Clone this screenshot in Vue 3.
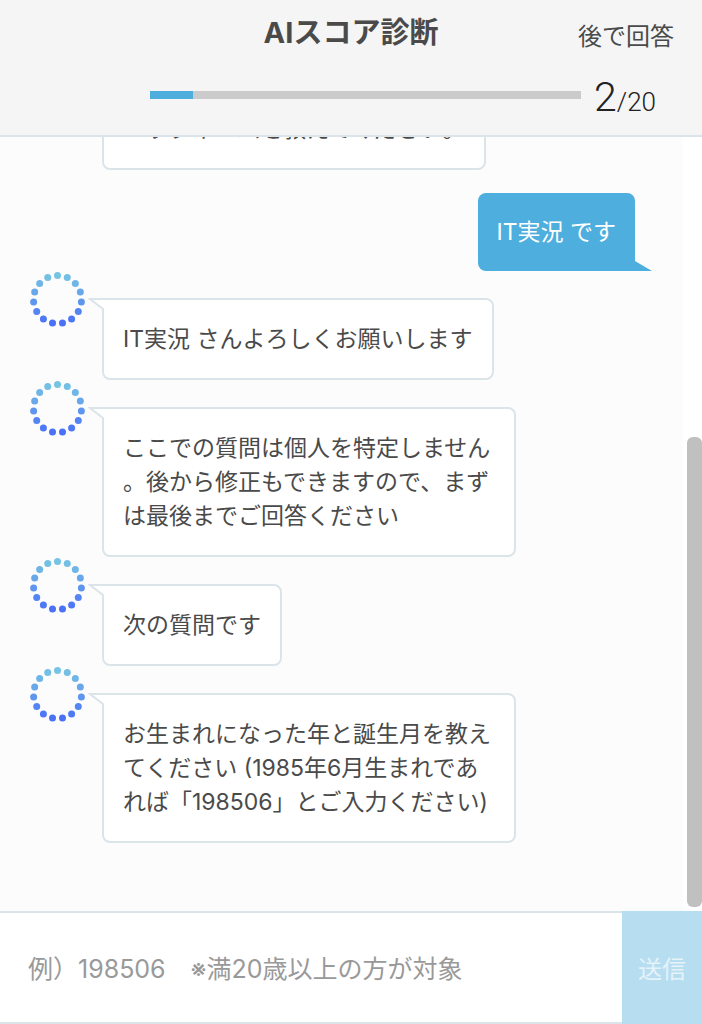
<script setup>
import { ref } from 'vue';

const current = 2;
const total = 20;
const answer = ref('');

const messages = [
  { from: 'bot', text: 'ニックネームを教えてください。' },
  { from: 'user', text: 'IT実況 です' },
  { from: 'bot', text: 'IT実況 さんよろしくお願いします' },
  { from: 'bot', text: 'ここでの質問は個人を特定しません。後から修正もできますので、まずは最後までご回答ください' },
  { from: 'bot', text: '次の質問です' },
  { from: 'bot', text: 'お生まれになった年と誕生月を教えてください (1985年6月生まれであれば「198506」とご入力ください)' },
];

const top = [118, 196, 228];
const bottom = [74, 112, 246];

// ring of 15 dots, light blue at the top fading to deep blue
const dots = Array.from({ length: 15 }, (_, i) => {
  const angle = (i * 2 * Math.PI) / 15;
  const fade = (1 - Math.cos(angle)) / 2;
  const rgb = top.map((c, n) => Math.round(c + (bottom[n] - c) * fade));
  return {
    x: 27.5 + 24 * Math.sin(angle),
    y: 27.5 - 24 * Math.cos(angle),
    fill: `rgb(${rgb.join(',')})`,
  };
});
</script>

<template>
  <div class="app">
    <header>
      <div class="heading">
        <h1>AIスコア診断</h1>
        <button class="later" type="button">後で回答</button>
      </div>
      <div class="progress">
        <div class="bar" role="progressbar" :aria-valuenow="current" aria-valuemin="0" :aria-valuemax="total">
          <div class="fill" :style="{ width: `${(current / total) * 100}%` }"></div>
        </div>
        <p class="count"><span class="current">{{ current }}</span>/{{ total }}</p>
      </div>
    </header>

    <main>
      <div class="messages">
        <div v-for="(message, i) in messages" :key="i" class="row" :class="message.from">
          <svg v-if="message.from == 'bot'" class="avatar" viewBox="0 0 55 55" aria-hidden="true">
            <circle v-for="(dot, n) in dots" :key="n" :cx="dot.x" :cy="dot.y" r="3.5" :fill="dot.fill" />
          </svg>
          <div class="bubble">
            <svg v-if="message.from == 'bot'" class="tail" viewBox="0 0 16 14" aria-hidden="true">
              <path d="M16 1H2L15 11V14H16Z" fill="#fff" />
              <path d="M16 1H2L15 11V14" fill="none" stroke="#dbe4e9" stroke-width="2" />
            </svg>
            <svg v-else class="tail" viewBox="0 0 17 10" aria-hidden="true">
              <path d="M0 0L17 10H0Z" fill="#4eaede" />
            </svg>
            <p>{{ message.text }}</p>
          </div>
        </div>
      </div>
      <div class="track">
        <div class="thumb"></div>
      </div>
    </main>

    <form @submit.prevent>
      <input v-model="answer" type="text" aria-label="回答" placeholder="例）198506　※満20歳以上の方が対象" />
      <button class="send" type="submit">送信</button>
    </form>
  </div>
</template>

<style>
body {
  margin: 0;
}
</style>

<style scoped>
* {
  box-sizing: border-box;
}

.app {
  display: flex;
  flex-direction: column;
  height: 100vh;
  font-family: Inter, 'Noto Sans CJK JP', sans-serif;
  color: #4a4a4a;
  background: #fcfcfc;
}

h1,
p {
  margin: 0;
}

button,
input {
  font-family: inherit;
  border: none;
  border-radius: 0;
  padding: 0;
}

header {
  flex: none;
  padding: 13px 28px 12px;
  background: #f5f5f5;
  border-bottom: 2px solid #dbe4e9;
}

.heading {
  display: grid;
  grid-template-columns: 1fr auto 1fr;
}

h1 {
  grid-column: 2;
  font-size: 29px;
  line-height: 40px;
  font-weight: 700;
}

.later {
  justify-self: end;
  align-self: end;
  font-size: 24px;
  line-height: 32px;
  color: #4a4a4a;
  background: none;
}

.progress {
  display: flex;
  align-items: center;
  gap: 13px;
  height: 70px;
  padding: 22px 18px 0 122px;
}

.bar {
  flex: 1;
  height: 8px;
  margin-bottom: 8px;
  background: #cbcbcb;
}

.fill {
  height: 100%;
  background: #4eaede;
}

.count {
  font-family: Roboto, sans-serif;
  font-size: 26px;
  line-height: 48px;
  font-weight: 300;
  color: #222;
}

.current {
  font-size: 41px;
}

main {
  display: flex;
  flex: 1;
  min-height: 0;
}

.messages {
  display: flex;
  flex: 1;
  flex-direction: column;
  justify-content: flex-end;
  overflow: hidden;
  padding: 0 48px 68px 30px;
}

.row {
  display: flex;
  flex: none;
  align-items: flex-start;
}

.row.user {
  justify-content: flex-end;
}

.avatar {
  flex: none;
  width: 55px;
  height: 55px;
  margin: 1px 17px 0 0;
}

.bubble {
  position: relative;
  max-width: 414px;
  margin-top: 27px;
  padding: 22px 19px;
  background: #fff;
  border: 2px solid #dbe4e9;
  border-radius: 0 8px 8px 8px;
  font-size: 23px;
  line-height: 34px;
  line-break: anywhere;
}

.user .bubble {
  margin-top: 23px;
  color: #fff;
  background: #4eaede;
  border: none;
  border-radius: 8px 8px 0 8px;
}

.bot .tail {
  position: absolute;
  top: -2px;
  left: -16px;
  width: 16px;
  height: 14px;
}

.user .tail {
  position: absolute;
  right: -17px;
  bottom: 0;
  width: 17px;
  height: 10px;
}

.track {
  display: flex;
  flex: none;
  flex-direction: column;
  justify-content: flex-end;
  width: 19px;
  padding: 0 0 4px 4px;
  background: #fff;
}

.thumb {
  height: 61%;
  background: #c0c0c0;
  border-radius: 6px;
}

form {
  display: flex;
  flex: none;
  height: 113px;
}

input {
  flex: 1;
  min-width: 0;
  padding: 2px 28px 0;
  font-size: 25px;
  color: #4a4a4a;
  background: #fff;
  border-top: 2px solid #dbe4e9;
  border-bottom: 2px solid #dbe4e9;
}

input::placeholder {
  color: #999;
  opacity: 1;
}

.send {
  flex: none;
  width: 80px;
  font-size: 24px;
  color: #e5f3fa;
  background: #b7ddf0;
}
</style>
